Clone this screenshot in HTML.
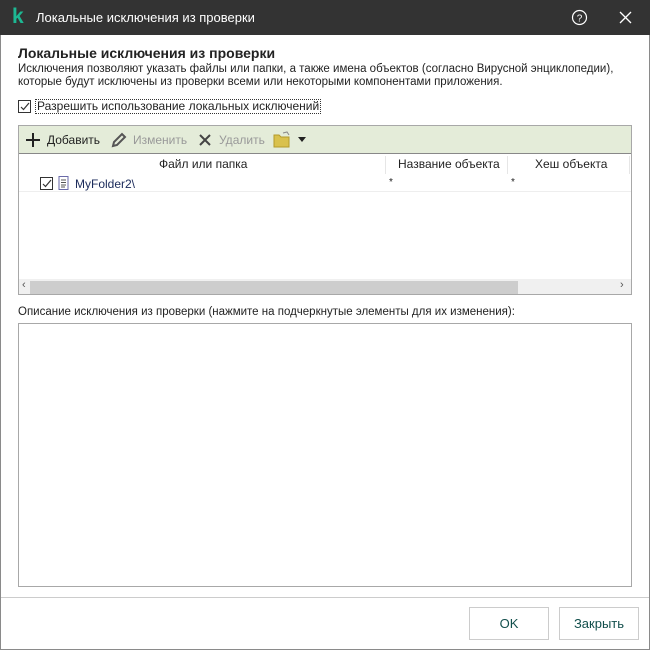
<!DOCTYPE html>
<html><head><meta charset="utf-8"><style>
*{margin:0;padding:0;box-sizing:border-box}
body{width:650px;height:650px;overflow:hidden;background:#fff;font-family:"Liberation Sans","DejaVu Sans",sans-serif;font-size:12px;color:#222;position:relative}
.win{position:absolute;left:0;top:0;width:650px;height:650px;border:1px solid #8a8a8a}
.title{position:absolute;left:0;top:0;width:650px;height:35px;background:#333;color:#fff}
.abs{position:absolute}
.box{position:absolute;border:1px solid #a8a8a8;background:#fff}
.btn{position:absolute;top:607px;width:80px;height:33px;border:1px solid #ccc;background:#fff;text-align:center;line-height:31px;font-size:13px;color:#124f4c}
.cb{position:absolute;width:13px;height:13px;border:1px solid #333;background:#fff}
</style></head><body>
<div class="win"></div>
<div class="title">
 <div class="abs" style="left:12px;top:7px;font-weight:bold;font-size:21px;color:#1db893;line-height:20px">k</div>
 <div class="abs" style="left:36px;top:10px;font-size:13px">Локальные исключения из проверки</div>
 <svg class="abs" style="left:571px;top:9px" width="17" height="17"><circle cx="8.5" cy="8.5" r="7" fill="none" stroke="#fff" stroke-width="1.2"/><text x="8.5" y="12.5" font-size="10" fill="#fff" text-anchor="middle" font-family="Liberation Sans">?</text></svg>
 <svg class="abs" style="left:619px;top:11px" width="13" height="13"><path d="M1 1L12 12M12 1L1 12" stroke="#fff" stroke-width="1.3"/></svg>
</div>
<div class="abs" style="left:18px;top:45px;font-size:14px;font-weight:bold">Локальные исключения из проверки</div>
<div class="abs" style="left:18px;top:63px;line-height:13px;font-size:11.5px">Исключения позволяют указать файлы или папки, а также имена объектов (согласно Вирусной энциклопедии),<br>которые будут исключены из проверки всеми или некоторыми компонентами приложения.</div>
<div class="cb" style="left:18px;top:100px"><svg width="11" height="11" style="position:absolute;left:0;top:0"><path d="M2 6L4.5 8.5L10 2" fill="none" stroke="#333" stroke-width="1.2"/></svg></div>
<div class="abs" style="left:35px;top:99px;border:1px dotted #333;padding:0 1px;line-height:13px">Разрешить использование локальных исключений</div>
<div class="box" style="left:18px;top:125px;width:614px;height:170px">
 <div class="abs" style="left:0;top:0;width:612px;height:28px;background:#e4ecd9;border-bottom:1px solid #888"></div>
 <svg class="abs" style="left:7px;top:7px" width="14" height="14"><path d="M7 0V14M0 7H14" stroke="#222" stroke-width="2"/></svg>
 <div class="abs" style="left:28px;top:7px">Добавить</div>
 <svg class="abs" style="left:92px;top:6px" width="16" height="16"><path d="M2 14L3 10L11 2L14 5L6 13Z" fill="none" stroke="#555" stroke-width="2"/></svg>
 <div class="abs" style="left:114px;top:7px;color:#999">Изменить</div>
 <svg class="abs" style="left:180px;top:8px" width="12" height="12"><path d="M1 1L11 11M11 1L1 11" stroke="#444" stroke-width="2"/></svg>
 <div class="abs" style="left:200px;top:7px;color:#999">Удалить</div>
 <svg class="abs" style="left:254px;top:5px" width="18" height="17"><path d="M1 4H6L8 6H16V16H1Z" fill="#d9c14d" stroke="#b39a2b"/><path d="M10 2L14 1L16 4" fill="none" stroke="#888"/></svg>
 <svg class="abs" style="left:279px;top:11px" width="8" height="5"><path d="M0 0H8L4 5Z" fill="#222"/></svg>
 <div class="abs" style="left:140px;top:31px">Файл или папка</div>
 <div class="abs" style="left:366px;top:30px;width:1px;height:18px;background:#e6e6e6"></div>
 <div class="abs" style="left:379px;top:31px">Название объекта</div>
 <div class="abs" style="left:488px;top:30px;width:1px;height:18px;background:#e6e6e6"></div>
 <div class="abs" style="left:516px;top:31px">Хеш объекта</div>
 <div class="abs" style="left:610px;top:30px;width:1px;height:18px;background:#e6e6e6"></div>
 <div class="cb" style="left:21px;top:51px"><svg width="11" height="11" style="position:absolute;left:0;top:0"><path d="M2 6L4.5 8.5L10 2" fill="none" stroke="#333" stroke-width="1.2"/></svg></div>
 <svg class="abs" style="left:39px;top:49px" width="11" height="15"><rect x="1" y="1.5" width="9" height="13" fill="#fff" stroke="#6a6aa8"/><path d="M3 5H8M3 7.5H8M3 10H8M3 12H7" stroke="#555"/></svg>
 <div class="abs" style="left:56px;top:51px;color:#1a2a5a">MyFolder2\</div>
 <div class="abs" style="left:370px;top:51px;font-size:10px">*</div>
 <div class="abs" style="left:492px;top:51px;font-size:10px">*</div>
 <div class="abs" style="left:0;top:65px;width:612px;height:1px;background:#eee"></div>
 <div class="abs" style="left:0;top:153px;width:612px;height:15px;background:#f0f0f0"></div>
 <div class="abs" style="left:11px;top:155px;width:488px;height:13px;background:#cdcdcd"></div>
 <div class="abs" style="left:3px;top:153px;font-size:11px;color:#555">‹</div>
 <div class="abs" style="left:601px;top:153px;font-size:11px;color:#555">›</div>
</div>
<div class="abs" style="left:18px;top:306px;font-size:11.5px">Описание исключения из проверки (нажмите на подчеркнутые элементы для их изменения):</div>
<div class="box" style="left:18px;top:323px;width:614px;height:264px"></div>
<div class="abs" style="left:1px;top:597px;width:648px;height:1px;background:#ccc"></div>
<div class="btn" style="left:469px">OK</div>
<div class="btn" style="left:559px">Закрыть</div>
</body></html>
